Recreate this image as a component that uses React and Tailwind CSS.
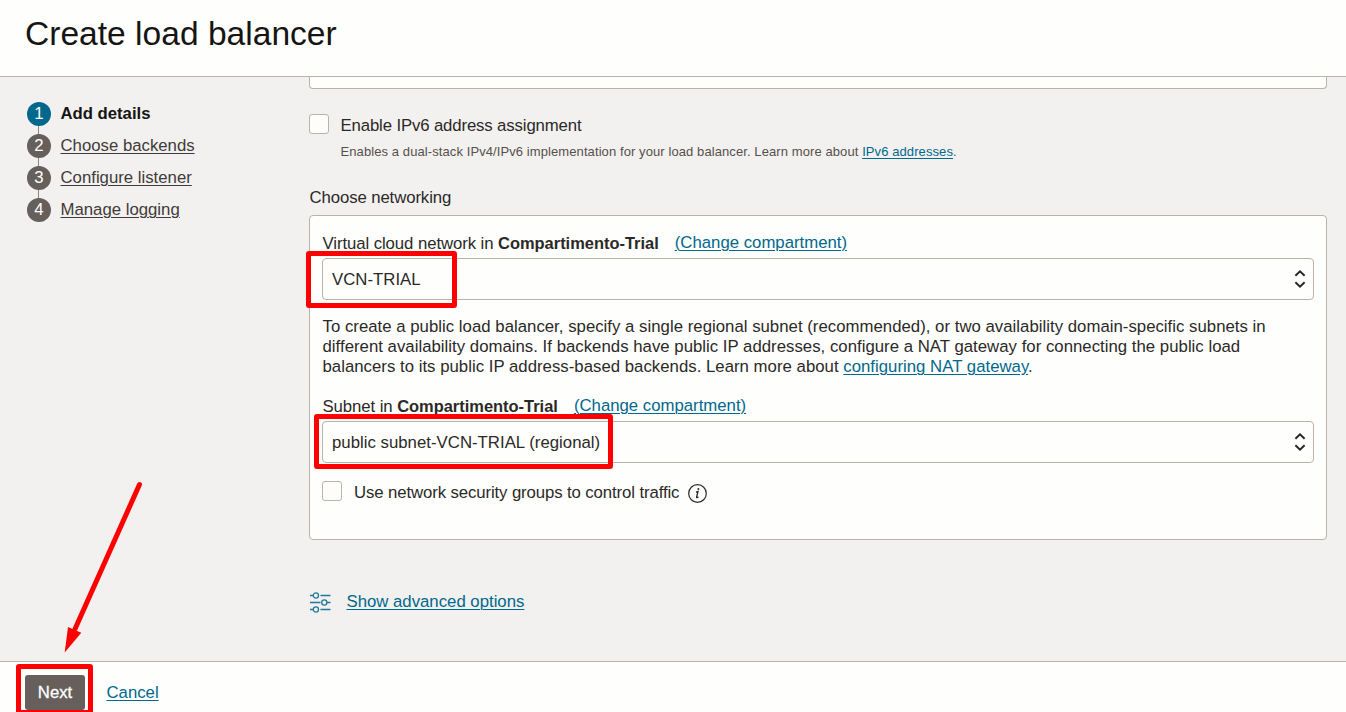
const steps = ["Add details", "Choose backends", "Configure listener", "Manage logging"];

function Stepper() {
  return (
    <ol className="flex w-[309px] shrink-0 flex-col gap-2 pl-[27px] pt-[25px]">
      {steps.map((label, i) => (
        <li key={label} className="relative flex h-6 items-center">
          {i < steps.length - 1 && (
            <span className="absolute left-[11px] top-6 h-2 w-px bg-[#8b8580]" />
          )}
          <span
            className={
              i === 0
                ? "flex size-6 items-center justify-center rounded-full bg-[#00688c] leading-6 text-white"
                : "flex size-6 items-center justify-center rounded-full bg-[#665f5b] leading-6 text-white"
            }
          >
            {i + 1}
          </span>
          {i === 0 ? (
            <span className="ml-[9.5px] text-[16.7px] font-bold leading-6 text-[#161513]">{label}</span>
          ) : (
            <a className="ml-[9.5px] leading-6 text-[#3f3b38] underline decoration-1 underline-offset-2">{label}</a>
          )}
        </li>
      ))}
    </ol>
  );
}

function Link({ children }) {
  return <a className="text-[#00688c] underline decoration-1 underline-offset-2">{children}</a>;
}

function Checkbox() {
  return <span className="size-5 shrink-0 rounded-[3px] border border-[#b9b3ab] bg-[#fdfdfb]" />;
}

function Select({ value, mark }) {
  return (
    <div className="relative flex h-[42px] items-center justify-between rounded-[4px] border border-[#b9b3ab] bg-[#fefefc] pl-[9px] pr-[7px]">
      <span className="pt-[2px] leading-5 tracking-[0.02px]">{value}</span>
      <svg width="12" height="20" viewBox="0 0 12 20" fill="none" stroke="#262422" strokeWidth="1.9">
        <path d="M1.400 6.700 6 2.300l4.600 4.400M1.400 13.300 6 17.700l4.600-4.400" />
      </svg>
      <span className={mark} />
    </div>
  );
}

function FieldLabel({ children }) {
  return (
    <div className="flex h-5 items-center leading-5">
      <span className="whitespace-pre pl-[0.5px]">
        <span className="tracking-[-0.08px]">{children} </span>
        <b className="text-[16.45px]">Compartimento-Trial</b>
      </span>
      <span className="ml-4">
        <Link>(Change compartment)</Link>
      </span>
    </div>
  );
}

export default function App() {
  return (
    <div className="relative flex h-[712px] w-[1346px] flex-col overflow-hidden bg-[#f3f1f0] font-['Liberation_Sans',Arial,sans-serif] text-[16.75px] text-[#2b2927]">
      <header className="h-[77px] shrink-0 border-b border-[#b9b3ab] bg-[#fefefc] pl-[25px] pt-[14px]">
        <h1 className="text-[33.6px] leading-10 text-[#161513]">Create load balancer</h1>
      </header>
      <div className="flex min-h-0 flex-1 overflow-hidden">
        <Stepper />
        <main className="w-[1018px]">
          <div className="h-3 rounded-b-[4px] border border-t-0 border-[#b9b3ab] bg-[#fefefc]" />
          <div className="mt-[25px] flex h-5 items-start">
            <Checkbox />
            <span className="ml-[11.5px] mt-[2px] leading-5 tracking-[-0.13px]">Enable IPv6 address assignment</span>
          </div>
          <p className="ml-[31.5px] mt-[10px] whitespace-nowrap text-[13px] leading-4 tracking-[0.09px] text-[#55504c]">
            Enables a dual-stack IPv4/IPv6 implementation for your load balancer. Learn more about{" "}
            <Link>IPv6 addresses</Link>.
          </p>
          <h2 className="ml-[0.5px] mt-[28px] h-5 leading-5 tracking-[-0.1px]">Choose networking</h2>
          <section className="mt-[7px] h-[325px] rounded-[4px] border border-[#b9b3ab] bg-[#fefefc] px-3 pt-[17px]">
            <FieldLabel>Virtual cloud network in</FieldLabel>
            <div className="mt-[5px]">
              <Select
                value="VCN-TRIAL"
                mark="absolute -left-[17px] -top-[8px] h-[57px] w-[151px] rounded-[3px] border-[5px] border-[#ff0000]"
              />
            </div>
            <p className="mt-[17px] whitespace-nowrap pl-[0.5px] leading-5 tracking-[0.022px]">
              To create a public load balancer, specify a single regional subnet (recommended), or two availability
              domain-specific subnets in
              <br />
              different availability domains. If backends have public IP addresses, configure a NAT gateway for
              connecting the public load
              <br />
              balancers to its public IP address-based backends. Learn more about <Link>configuring NAT gateway</Link>.
            </p>
            <div className="mt-[19px]">
              <FieldLabel>Subnet in</FieldLabel>
            </div>
            <div className="mt-[5px]">
              <Select
                value="public subnet-VCN-TRIAL (regional)"
                mark="absolute -left-[9px] -top-[8px] h-[55px] w-[299px] rounded-[3px] border-[5px] border-[#ff0000]"
              />
            </div>
            <div className="mt-[18px] flex h-5">
              <Checkbox />
              <span className="ml-3 mt-[2px] leading-5 tracking-[-0.105px]">Use network security groups to control traffic</span>
              <svg className="ml-[9px] mt-[3px]" width="19" height="19" viewBox="0 0 19 19" fill="none" stroke="#2b2927">
                <circle cx="9.5" cy="9.5" r="8.8" strokeWidth="1.2" />
                <path d="M8 8.100 10 7.400 8.600 13q-.2 1 .9.5l.9-.6" strokeWidth="1.3" />
                <circle cx="10.4" cy="5.1" r="1" fill="#2b2927" stroke="none" />
              </svg>
            </div>
          </section>
          <div className="mt-[51px] flex h-[22px] items-start">
            <svg className="mt-px" width="22" height="22" viewBox="0 0 22 22" fill="none" stroke="#1f7a99" strokeWidth="1.3">
              <path d="M1 3.500h3M11.500 3.500h10M1 10.500h10.500M18 10.500h3.500M1 17.500h3M11.500 17.500h10" />
              <circle cx="6.9" cy="3.5" r="2.6" />
              <circle cx="15.3" cy="10.5" r="2.6" />
              <circle cx="6.9" cy="17.5" r="2.6" />
            </svg>
            <span className="ml-[15.5px] mt-px leading-5">
              <Link>Show advanced options</Link>
            </span>
          </div>
        </main>
      </div>
      <footer className="flex h-[51px] shrink-0 border-t border-[#b9b3ab] bg-[#fefefc] pl-[25px] pt-[13px]">
        <button className="relative h-[35px] w-[60px] rounded-[3px] bg-[#665f5b] text-[16.7px] leading-[35px] text-white [-webkit-text-stroke:0.3px_white]">
          Next
          <span className="absolute -left-[9px] -top-[11px] h-[51px] w-[77px] rounded-[3px] border-[5px] border-[#ff0000]" />
        </button>
        <span className="ml-[21.5px] leading-[35px]">
          <Link>Cancel</Link>
        </span>
      </footer>
      <svg className="absolute left-[60px] top-[478px]" width="90" height="180" viewBox="60 478 90 180">
        <path d="M139.500 484.500 75 629" stroke="#ff0000" strokeWidth="5" strokeLinecap="round" />
        <path d="M68 627 81.300 632.800 64.700 652.500Z" fill="#ff0000" />
      </svg>
    </div>
  );
}
